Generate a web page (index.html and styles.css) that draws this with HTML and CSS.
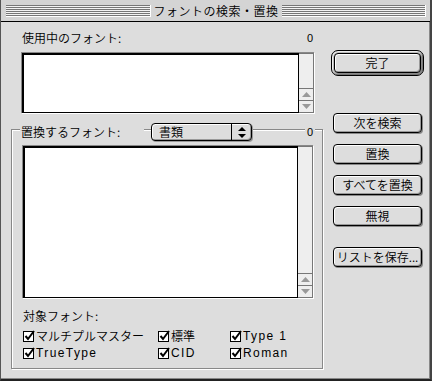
FILE: index.html
```html
<!DOCTYPE html>
<html lang="ja">
<head>
<meta charset="utf-8">
<link rel="stylesheet" href="styles.css">
</head>
<body>
<div class="window">
  <div class="titlebar">
    <span class="stripes"></span>
    <span class="title">フォントの検索・置換</span>
    <span class="stripes"></span>
  </div>
  <div class="content">
    <div class="left">
      <div class="head">
        <span>使用中のフォント:</span>
        <span class="count">0</span>
      </div>
      <div class="list list-short">
        <div class="list-area"></div>
        <div class="scrollbar">
          <div class="track"></div>
          <div class="arrow"><svg width="9" height="5" viewBox="0 0 9 5"><path d="M4.5 0 L9 5 L0 5 Z" fill="#999"/></svg></div>
          <div class="arrow"><svg width="9" height="5" viewBox="0 0 9 5"><path d="M0 0 L9 0 L4.5 5 Z" fill="#999"/></svg></div>
        </div>
      </div>
      <div class="group">
        <div class="group-head">
          <span class="legend">置換するフォント:</span>
          <div class="popup">
            <span class="popup-label">書類</span>
            <span class="popup-arrows"><svg width="8" height="11" viewBox="0 0 8 11"><path d="M4 0 L8 4 L0 4 Z M0 7 L8 7 L4 11 Z" fill="#000"/></svg></span>
          </div>
          <span class="legend-count">0</span>
        </div>
        <div class="list list-tall">
          <div class="list-area"></div>
          <div class="scrollbar">
            <div class="track"></div>
            <div class="arrow"><svg width="9" height="5" viewBox="0 0 9 5"><path d="M4.5 0 L9 5 L0 5 Z" fill="#999"/></svg></div>
            <div class="arrow"><svg width="9" height="5" viewBox="0 0 9 5"><path d="M0 0 L9 0 L4.5 5 Z" fill="#999"/></svg></div>
          </div>
        </div>
        <div class="target-label">対象フォント:</div>
        <div class="checks">
          <label class="check"><span class="box"><svg width="12" height="12" viewBox="0 0 12 12"><rect x="0.5" y="1.5" width="10" height="10" fill="#fff" stroke="#000"/><path d="M2.5 6 L5 9 L11 1" fill="none" stroke="#000" stroke-width="2"/></svg></span>マルチプルマスター</label>
          <label class="check"><span class="box"><svg width="12" height="12" viewBox="0 0 12 12"><rect x="0.5" y="1.5" width="10" height="10" fill="#fff" stroke="#000"/><path d="M2.5 6 L5 9 L11 1" fill="none" stroke="#000" stroke-width="2"/></svg></span>標準</label>
          <label class="check"><span class="box"><svg width="12" height="12" viewBox="0 0 12 12"><rect x="0.5" y="1.5" width="10" height="10" fill="#fff" stroke="#000"/><path d="M2.5 6 L5 9 L11 1" fill="none" stroke="#000" stroke-width="2"/></svg></span><span class="latin">Type 1</span></label>
          <label class="check"><span class="box"><svg width="12" height="12" viewBox="0 0 12 12"><rect x="0.5" y="1.5" width="10" height="10" fill="#fff" stroke="#000"/><path d="M2.5 6 L5 9 L11 1" fill="none" stroke="#000" stroke-width="2"/></svg></span><span class="latin">TrueType</span></label>
          <label class="check"><span class="box"><svg width="12" height="12" viewBox="0 0 12 12"><rect x="0.5" y="1.5" width="10" height="10" fill="#fff" stroke="#000"/><path d="M2.5 6 L5 9 L11 1" fill="none" stroke="#000" stroke-width="2"/></svg></span><span class="latin">CID</span></label>
          <label class="check"><span class="box"><svg width="12" height="12" viewBox="0 0 12 12"><rect x="0.5" y="1.5" width="10" height="10" fill="#fff" stroke="#000"/><path d="M2.5 6 L5 9 L11 1" fill="none" stroke="#000" stroke-width="2"/></svg></span><span class="latin">Roman</span></label>
        </div>
      </div>
    </div>
    <div class="right">
      <div class="default-ring"><button class="btn">完了</button></div>
      <button class="btn btn-find">次を検索</button>
      <button class="btn">置換</button>
      <button class="btn">すべてを置換</button>
      <button class="btn">無視</button>
      <button class="btn btn-save">リストを保存...</button>
    </div>
  </div>
</div>
</body>
</html>
```
FILE: styles.css
```css
* { box-sizing: border-box; }
html, body { margin: 0; padding: 0; }
body {
  width: 432px;
  height: 381px;
  background: #ddd;
  font-family: "Noto Sans CJK JP", "DejaVu Sans", sans-serif;
  font-size: 12px;
  font-weight: 350;
  color: #000;
  overflow: hidden;
}
.window {
  width: 432px;
  height: 381px;
  display: flex;
  flex-direction: column;
  border-left: 1px solid #555;
  border-right: 2px solid #444;
  border-bottom: 2px solid #222;
  background: #ddd;
}
.titlebar {
  height: 22px;
  flex: none;
  background: #d4d4d4;
  border-bottom: 1px solid #000;
  display: flex;
  align-items: center;
  padding: 0 4px 0 5px;
}
.stripes {
  flex: 1;
  height: 12px;
  background: repeating-linear-gradient(to bottom, #777 0 1px, #f4f4f4 1px 2px);
  border-right: 1px solid #fff;
  border-bottom: 1px solid #fff;
}
.title {
  padding: 0 3px;
  line-height: 14px;
  font-size: 12px;
  letter-spacing: 0.5px;
}
.content {
  flex: 1;
  display: flex;
  padding: 9px 0 0 10px;
  gap: 8px;
  border-bottom: 1px solid #888;
  border-right: 1px solid #888;
}
.left {
  width: 312px;
  flex: none;
  display: flex;
  flex-direction: column;
}
.head {
  display: flex;
  justify-content: space-between;
  margin: 0 10px 0 11px;
  height: 14px;
  line-height: 14px;
}
.count { font-family: "Liberation Sans", sans-serif; font-size: 11px; font-weight: normal; }
.list {
  display: flex;
  margin: 7px 9px 0 10px;
  border-top: 1px solid #888;
  border-left: 1px solid #888;
  box-shadow: 1px 1px 0 #fff;
}
.list-short { height: 61px; }
.list-tall { height: 153px; margin-top: 4px; }
.list-area {
  flex: 1;
  background: #fff;
  border: 2px solid #000;
  border-right-width: 1px;
  border-bottom-width: 1px;
}
.scrollbar {
  width: 15px;
  flex: none;
  display: flex;
  flex-direction: column;
  background: #eee;
  border-top: 1px solid #777;
  border-right: 1px solid #777;
  border-bottom: 1px solid #777;
}
.track { flex: 1; }
.arrow {
  height: 12px;
  border-top: 1px solid #777;
  display: flex;
  align-items: center;
  justify-content: center;
}
.arrow svg { display: block; }
.group {
  margin-top: 16px;
  height: 240px;
  border: 1px solid #888;
  box-shadow: inset 1px 1px 0 #fff, 1px 1px 0 #fff;
  display: flex;
  flex-direction: column;
  padding-bottom: 6px;
}
.group-head {
  margin-top: -7px;
  height: 18px;
  display: flex;
  align-items: center;
  padding: 0 7px 0 8px;
}
.legend {
  background: #ddd;
  padding: 0 1px;
  line-height: 14px;
  width: 124px;
}
.popup {
  margin-left: 7px;
  width: 101px;
  height: 18px;
  border: 1px solid #000;
  border-radius: 4px;
  background: #ddd;
  box-shadow: inset 1px 1px 0 #fff, inset -1px -1px 0 #999, 1px 1px 0 #999;
  display: flex;
  align-items: center;
}
.popup-label { flex: 1; padding-left: 7px; line-height: 14px; }
.popup-arrows {
  width: 20px;
  height: 16px;
  border-left: 1px solid #000;
  display: flex;
  align-items: center;
  justify-content: center;
}
.popup-arrows svg { display: block; }
.legend-count {
  margin-left: auto;
  background: #ddd;
  padding: 0 2px;
  font-family: "Liberation Sans", sans-serif;
  font-size: 11px;
  font-weight: normal;
  line-height: 14px;
}
.target-label {
  margin: 11px 0 0 11px;
  line-height: 14px;
  height: 14px;
}
.checks {
  margin: 6px 0 0 11px;
  display: grid;
  grid-template-columns: 135px 72px auto;
  row-gap: 3px;
}
.check {
  display: flex;
  align-items: center;
  height: 14px;
  line-height: 14px;
  white-space: nowrap;
  gap: 1px;
}
.latin {
  font-family: "Liberation Sans", sans-serif;
  font-weight: normal;
  letter-spacing: 1.4px;
}
.box { width: 12px; flex: none; display: flex; }
.box svg { display: block; }
.right {
  width: 93px;
  flex: none;
  display: flex;
  flex-direction: column;
  align-items: center;
}
.default-ring {
  margin-top: 19px;
  width: 93px;
  height: 26px;
  border: 1px solid #000;
  border-radius: 7px;
  background: #bbb;
  box-shadow: inset 1px 1px 0 #eee, inset -1px -1px 0 #777;
  padding: 2px;
  display: flex;
}
.default-ring .btn { width: 100%; height: 100%; }
.btn {
  width: 89px;
  height: 20px;
  font-family: inherit;
  font-size: 12px;
  font-weight: 350;
  line-height: 14px;
  padding: 0;
  color: #000;
  background: #ddd;
  border: 1px solid #000;
  border-radius: 4px;
  box-shadow: inset 1px 1px 0 #fff, inset -1px -1px 0 #999, 1px 1px 0 #888;
}
.btn + .btn { margin-top: 11px; }
.right .btn-find { margin-top: 37px; }
.right .btn-save { margin-top: 21px; }
```
